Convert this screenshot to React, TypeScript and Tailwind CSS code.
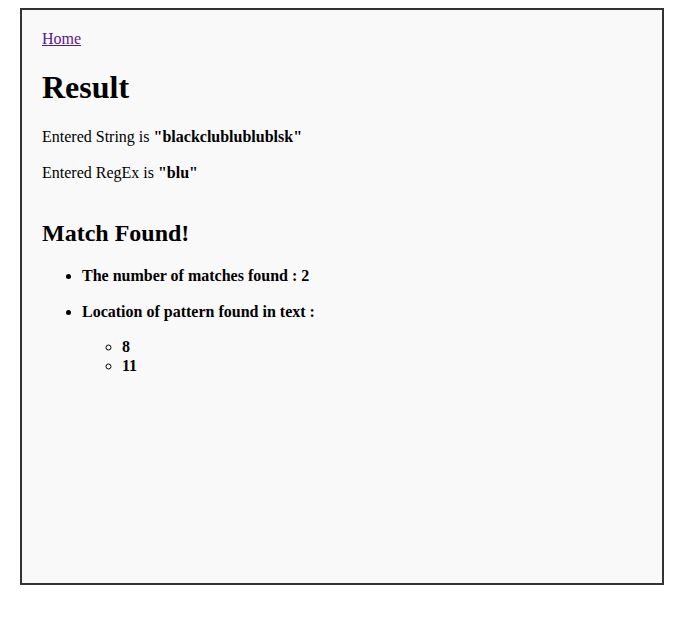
export default function App() {
  const locations = [8, 11];

  return (
    <div className="min-h-screen bg-white pt-[8px] font-['Liberation_Serif','Times_New_Roman',serif] text-[16px] text-black">
      <div className="ml-[20px] h-[577px] w-[644px] border-2 border-[#333333] bg-[#f9f9f9] px-[20px] pt-[19px]">
        <div className="leading-[20px]">
          <a href="#" className="text-[#551a8b] underline">
            Home
          </a>
        </div>

        <h1 className="mt-[20px] text-[32px] font-bold leading-[37px]">Result</h1>

        <p className="mt-[21px] leading-[20px]">
          Entered String is <b>"blackclublublublsk"</b>
        </p>
        <p className="mt-[16px] leading-[20px]">
          Entered RegEx is <b>"blu"</b>
        </p>

        <h2 className="mt-[36px] text-[24px] font-bold leading-[28px]">Match Found!</h2>

        <ul className="mt-[19px] list-disc pl-10 font-bold leading-[20px]">
          <li>The number of matches found : 2</li>
          <li className="mt-[16px]">
            Location of pattern found in text :
            <ul className="mt-[15px] list-[circle] pl-10 leading-[19px]">
              {locations.map((loc) => (
                <li key={loc}>{loc}</li>
              ))}
            </ul>
          </li>
        </ul>
      </div>
    </div>
  );
}
